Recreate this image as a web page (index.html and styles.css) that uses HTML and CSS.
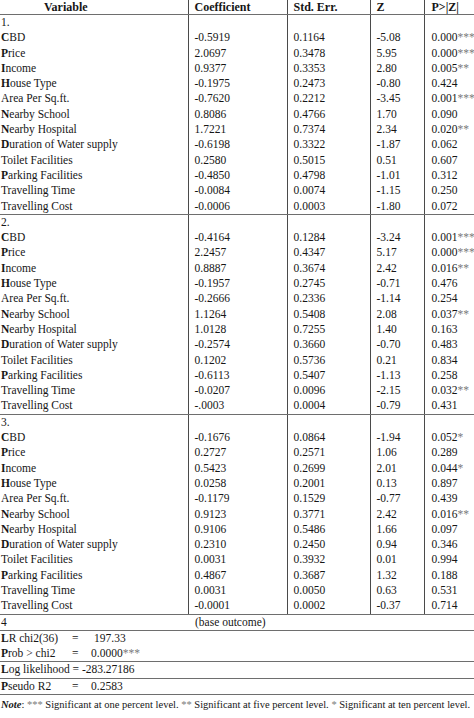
FILE: index.html
```html
<!DOCTYPE html>
<html>
<head>
<meta charset="utf-8">
<link rel="stylesheet" href="styles.css">
</head>
<body>
<table class="tbl">
<colgroup><col class="c1"><col class="c2"><col class="c3"><col class="c4"><col class="c5"></colgroup>
<thead>
<tr><th class="var-h">Variable</th><th class="n">Coefficient</th><th class="n">Std. Err.</th><th class="n">Z</th><th class="n">P&gt;|Z|</th></tr>
</thead>
<tbody>
<tr><td class="var">1.</td><td class="n"></td><td class="n"></td><td class="n"></td><td class="n"></td></tr>
<tr><td class="var"><b>C</b>BD</td><td class="n">-0.5919</td><td class="n">0.1164</td><td class="n">-5.08</td><td class="n">0.000<span class="st">***</span></td></tr>
<tr><td class="var"><b>P</b>rice</td><td class="n">2.0697</td><td class="n">0.3478</td><td class="n">5.95</td><td class="n">0.000<span class="st">***</span></td></tr>
<tr><td class="var"><b>I</b>ncome</td><td class="n">0.9377</td><td class="n">0.3353</td><td class="n">2.80</td><td class="n">0.005<span class="st">**</span></td></tr>
<tr><td class="var"><b>H</b>ouse Type</td><td class="n">-0.1975</td><td class="n">0.2473</td><td class="n">-0.80</td><td class="n">0.424</td></tr>
<tr><td class="var">Area Per Sq.ft.</td><td class="n">-0.7620</td><td class="n">0.2212</td><td class="n">-3.45</td><td class="n">0.001<span class="st">***</span></td></tr>
<tr><td class="var"><b>N</b>earby School</td><td class="n">0.8086</td><td class="n">0.4766</td><td class="n">1.70</td><td class="n">0.090</td></tr>
<tr><td class="var"><b>N</b>earby Hospital</td><td class="n">1.7221</td><td class="n">0.7374</td><td class="n">2.34</td><td class="n">0.020<span class="st">**</span></td></tr>
<tr><td class="var"><b>D</b>uration of Water supply</td><td class="n">-0.6198</td><td class="n">0.3322</td><td class="n">-1.87</td><td class="n">0.062</td></tr>
<tr><td class="var">Toilet Facilities</td><td class="n">0.2580</td><td class="n">0.5015</td><td class="n">0.51</td><td class="n">0.607</td></tr>
<tr><td class="var"><b>P</b>arking Facilities</td><td class="n">-0.4850</td><td class="n">0.4798</td><td class="n">-1.01</td><td class="n">0.312</td></tr>
<tr><td class="var">Travelling Time</td><td class="n">-0.0084</td><td class="n">0.0074</td><td class="n">-1.15</td><td class="n">0.250</td></tr>
<tr class="end"><td class="var">Travelling Cost</td><td class="n">-0.0006</td><td class="n">0.0003</td><td class="n">-1.80</td><td class="n">0.072</td></tr>

<tr><td class="var">2.</td><td class="n"></td><td class="n"></td><td class="n"></td><td class="n"></td></tr>
<tr><td class="var"><b>C</b>BD</td><td class="n">-0.4164</td><td class="n">0.1284</td><td class="n">-3.24</td><td class="n">0.001<span class="st">***</span></td></tr>
<tr><td class="var"><b>P</b>rice</td><td class="n">2.2457</td><td class="n">0.4347</td><td class="n">5.17</td><td class="n">0.000<span class="st">***</span></td></tr>
<tr><td class="var"><b>I</b>ncome</td><td class="n">0.8887</td><td class="n">0.3674</td><td class="n">2.42</td><td class="n">0.016<span class="st">**</span></td></tr>
<tr><td class="var"><b>H</b>ouse Type</td><td class="n">-0.1957</td><td class="n">0.2745</td><td class="n">-0.71</td><td class="n">0.476</td></tr>
<tr><td class="var">Area Per Sq.ft.</td><td class="n">-0.2666</td><td class="n">0.2336</td><td class="n">-1.14</td><td class="n">0.254</td></tr>
<tr><td class="var"><b>N</b>earby School</td><td class="n">1.1264</td><td class="n">0.5408</td><td class="n">2.08</td><td class="n">0.037<span class="st">**</span></td></tr>
<tr><td class="var"><b>N</b>earby Hospital</td><td class="n">1.0128</td><td class="n">0.7255</td><td class="n">1.40</td><td class="n">0.163</td></tr>
<tr><td class="var"><b>D</b>uration of Water supply</td><td class="n">-0.2574</td><td class="n">0.3660</td><td class="n">-0.70</td><td class="n">0.483</td></tr>
<tr><td class="var">Toilet Facilities</td><td class="n">0.1202</td><td class="n">0.5736</td><td class="n">0.21</td><td class="n">0.834</td></tr>
<tr><td class="var"><b>P</b>arking Facilities</td><td class="n">-0.6113</td><td class="n">0.5407</td><td class="n">-1.13</td><td class="n">0.258</td></tr>
<tr><td class="var">Travelling Time</td><td class="n">-0.0207</td><td class="n">0.0096</td><td class="n">-2.15</td><td class="n">0.032<span class="st">**</span></td></tr>
<tr class="end"><td class="var">Travelling Cost</td><td class="n">-.0003</td><td class="n">0.0004</td><td class="n">-0.79</td><td class="n">0.431</td></tr>

<tr><td class="var">3.</td><td class="n"></td><td class="n"></td><td class="n"></td><td class="n"></td></tr>
<tr><td class="var"><b>C</b>BD</td><td class="n">-0.1676</td><td class="n">0.0864</td><td class="n">-1.94</td><td class="n">0.052<span class="st">*</span></td></tr>
<tr><td class="var"><b>P</b>rice</td><td class="n">0.2727</td><td class="n">0.2571</td><td class="n">1.06</td><td class="n">0.289</td></tr>
<tr><td class="var"><b>I</b>ncome</td><td class="n">0.5423</td><td class="n">0.2699</td><td class="n">2.01</td><td class="n">0.044<span class="st">*</span></td></tr>
<tr><td class="var"><b>H</b>ouse Type</td><td class="n">0.0258</td><td class="n">0.2001</td><td class="n">0.13</td><td class="n">0.897</td></tr>
<tr><td class="var">Area Per Sq.ft.</td><td class="n">-0.1179</td><td class="n">0.1529</td><td class="n">-0.77</td><td class="n">0.439</td></tr>
<tr><td class="var"><b>N</b>earby School</td><td class="n">0.9123</td><td class="n">0.3771</td><td class="n">2.42</td><td class="n">0.016<span class="st">**</span></td></tr>
<tr><td class="var"><b>N</b>earby Hospital</td><td class="n">0.9106</td><td class="n">0.5486</td><td class="n">1.66</td><td class="n">0.097</td></tr>
<tr><td class="var"><b>D</b>uration of Water supply</td><td class="n">0.2310</td><td class="n">0.2450</td><td class="n">0.94</td><td class="n">0.346</td></tr>
<tr><td class="var">Toilet Facilities</td><td class="n">0.0031</td><td class="n">0.3932</td><td class="n">0.01</td><td class="n">0.994</td></tr>
<tr><td class="var"><b>P</b>arking Facilities</td><td class="n">0.4867</td><td class="n">0.3687</td><td class="n">1.32</td><td class="n">0.188</td></tr>
<tr><td class="var">Travelling Time</td><td class="n">0.0031</td><td class="n">0.0050</td><td class="n">0.63</td><td class="n">0.531</td></tr>
<tr class="end"><td class="var">Travelling Cost</td><td class="n">-0.0001</td><td class="n">0.0002</td><td class="n">-0.37</td><td class="n">0.714</td></tr>
</tbody>
</table>

<div class="base"><span class="base-lbl">4</span><span>(base outcome)</span></div>
<div class="block">
  <div class="line"><span class="lbl"><b>L</b>R chi2(36)</span><span class="eq">=</span><span class="val val-lr">197.33</span></div>
  <div class="line"><span class="lbl"><b>P</b>rob &gt; chi2</span><span class="eq">=</span><span class="val">0.0000<span class="st">***</span></span></div>
</div>
<div class="block">
  <div class="line"><b>L</b>og likelihood = -283.27186</div>
</div>
<div class="block">
  <div class="line"><span class="lbl"><b>P</b>seudo R2</span><span class="eq">=</span><span class="val">0.2583</span></div>
</div>
<div class="note"><b><i>Note</i></b>: <span class="st">***</span> Significant at one percent level. <span class="st">**</span> Significant at five percent level. <span class="st">*</span> Significant at ten percent level.</div>
</body>
</html>
```

FILE: styles.css
```css
html, body {
  margin: 0;
  padding: 0;
  background: #ffffff;
  overflow: hidden;
}

body {
  font-family: "Liberation Serif", "Times New Roman", serif;
  font-size: 11.5px;
  color: #161616;
}

.tbl {
  border-collapse: collapse;
  table-layout: fixed;
  width: 474px;
}

.c1 { width: 188px; }
.c2 { width: 99px; }
.c3 { width: 83px; }
.c4 { width: 54px; }
.c5 { width: 50px; }

.tbl th {
  font-size: 12px;
  font-weight: bold;
  text-align: left;
  line-height: 14px;
  padding: 0 0 0 6px;
  white-space: nowrap;
  border-bottom: 1px solid #6e6e6e;
}

.tbl th.var-h {
  padding-left: 44px;
}

.tbl td {
  padding: 0 0 0 6px;
  line-height: 15.3px;
  white-space: nowrap;
  overflow: hidden;
}

.tbl td.var {
  padding-left: 1px;
}

.tbl .n {
  border-left: 1px solid #4a4a4a;
}

.tbl tr.end td {
  border-bottom: 1px solid #6e6e6e;
}

.tbl td.n:last-child,
.tbl th.n:last-child {
  padding-left: 7px;
}

.st {
  color: #7a7a7a;
}

.base {
  display: flex;
  line-height: 15.3px;
  padding-left: 1px;
  border-bottom: 1px solid #6e6e6e;
}

.base-lbl {
  width: 194px;
}

.block {
  border-bottom: 1px solid #6e6e6e;
}

.line {
  line-height: 15.3px;
  padding-left: 1px;
  white-space: nowrap;
}

.lbl {
  display: inline-block;
  width: 71px;
}

.eq {
  display: inline-block;
  width: 19px;
}

.val-lr {
  padding-left: 3px;
}

.note {
  font-size: 10.5px;
  line-height: 15.3px;
  padding: 2px 0 0 1px;
  white-space: nowrap;
}
```
